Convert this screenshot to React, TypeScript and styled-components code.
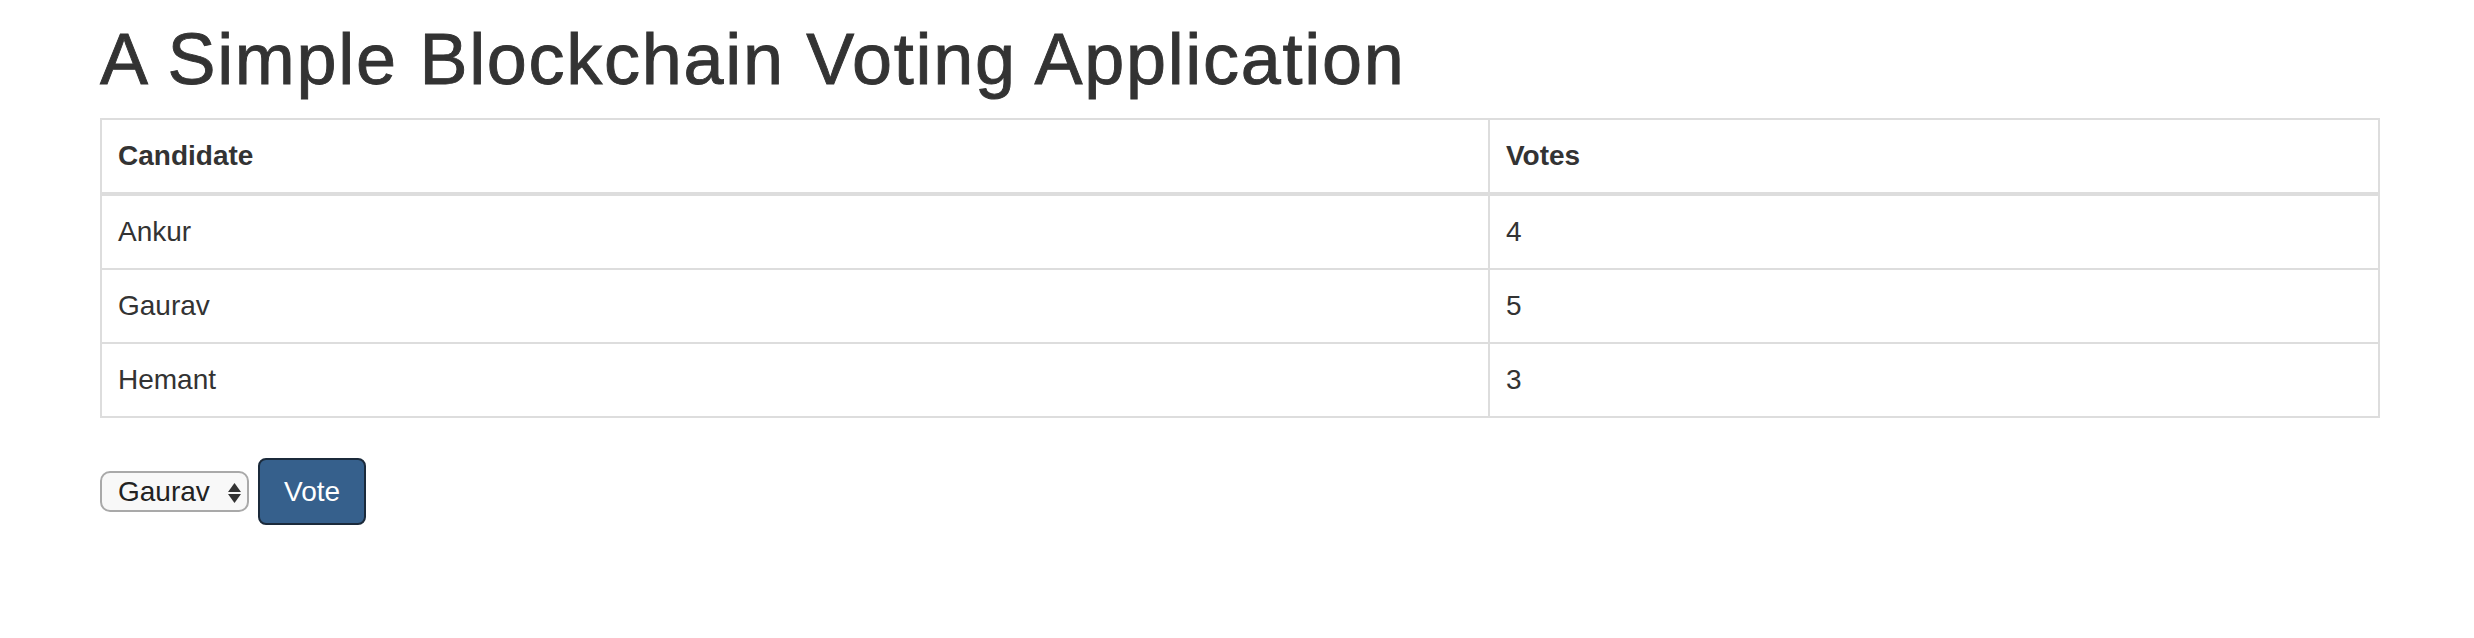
import React from "react";
import styled, { createGlobalStyle } from "styled-components";

const GlobalStyle = createGlobalStyle`
  html, body {
    margin: 0;
    padding: 0;
    background: #ffffff;
  }
  body {
    font-family: "Liberation Sans", Arial, Helvetica, sans-serif;
    color: #333333;
    font-size: 28px;
    line-height: 40px;
  }
  * { box-sizing: border-box; }
`;

const Page = styled.div`
  padding: 0 94px 0 100px;
`;

const Title = styled.h1`
  margin: 20px 0 19px;
  font-size: 72px;
  line-height: 79px;
  font-weight: 400;
  letter-spacing: 1.7px;
  -webkit-text-stroke: 0.9px #333333;
  color: #333333;
`;

const Table = styled.table`
  width: 100%;
  border-collapse: collapse;
  border-spacing: 0;
  border: 2px solid #dddddd;
  margin-bottom: 40px;
  table-layout: fixed;
`;

const HeadCell = styled.th`
  text-align: left;
  font-weight: 700;
  padding: 16px;
  line-height: 40px;
  border: 2px solid #dddddd;
  border-bottom: 4px solid #dddddd;
  vertical-align: bottom;
`;

const Cell = styled.td`
  padding: 16px;
  line-height: 40px;
  border: 2px solid #dddddd;
  vertical-align: top;
`;

const Form = styled.div`
  display: flex;
  align-items: center;
  gap: 9px;
`;

const SelectWrap = styled.div`
  position: relative;
  display: inline-flex;
`;

const Select = styled.select`
  appearance: none;
  -webkit-appearance: none;
  width: 149px;
  height: 41px;
  margin: 0;
  padding: 0 30px 0 16px;
  font-family: "Liberation Sans", Arial, Helvetica, sans-serif;
  font-size: 28px;
  color: #222222;
  background: #f8f8f8;
  border: 2px solid #a9a9a9;
  border-radius: 10px;
  outline: none;
`;

const Arrows = styled.svg`
  position: absolute;
  right: 8px;
  top: 12px;
  pointer-events: none;
`;

const VoteButton = styled.button`
  height: 67px;
  padding: 0 24px;
  margin: 0;
  font-family: "Liberation Sans", Arial, Helvetica, sans-serif;
  font-size: 28px;
  line-height: 40px;
  color: #ffffff;
  background: #36608c;
  border: 2px solid #1b2a3b;
  border-radius: 8px;
  cursor: pointer;
`;

const candidates = [
  { name: "Ankur", votes: 4 },
  { name: "Gaurav", votes: 5 },
  { name: "Hemant", votes: 3 },
];

export default function App() {
  return (
    <>
      <GlobalStyle />
      <Page>
        <Title>A Simple Blockchain Voting Application</Title>
        <Table>
          <colgroup>
            <col style={{ width: "1388px" }} />
            <col />
          </colgroup>
          <thead>
            <tr>
              <HeadCell>Candidate</HeadCell>
              <HeadCell>Votes</HeadCell>
            </tr>
          </thead>
          <tbody>
            {candidates.map((c) => (
              <tr key={c.name}>
                <Cell>{c.name}</Cell>
                <Cell>{c.votes}</Cell>
              </tr>
            ))}
          </tbody>
        </Table>
        <Form>
          <SelectWrap>
            <Select defaultValue="Gaurav">
              {candidates.map((c) => (
                <option key={c.name} value={c.name}>
                  {c.name}
                </option>
              ))}
            </Select>
            <Arrows width="13" height="20" viewBox="0 0 13 20">
              <path d="M6.5 0 L13 9 L0 9 Z" fill="#333333" />
              <path d="M0 11 L13 11 L6.5 20 Z" fill="#333333" />
            </Arrows>
          </SelectWrap>
          <VoteButton>Vote</VoteButton>
        </Form>
      </Page>
    </>
  );
}
